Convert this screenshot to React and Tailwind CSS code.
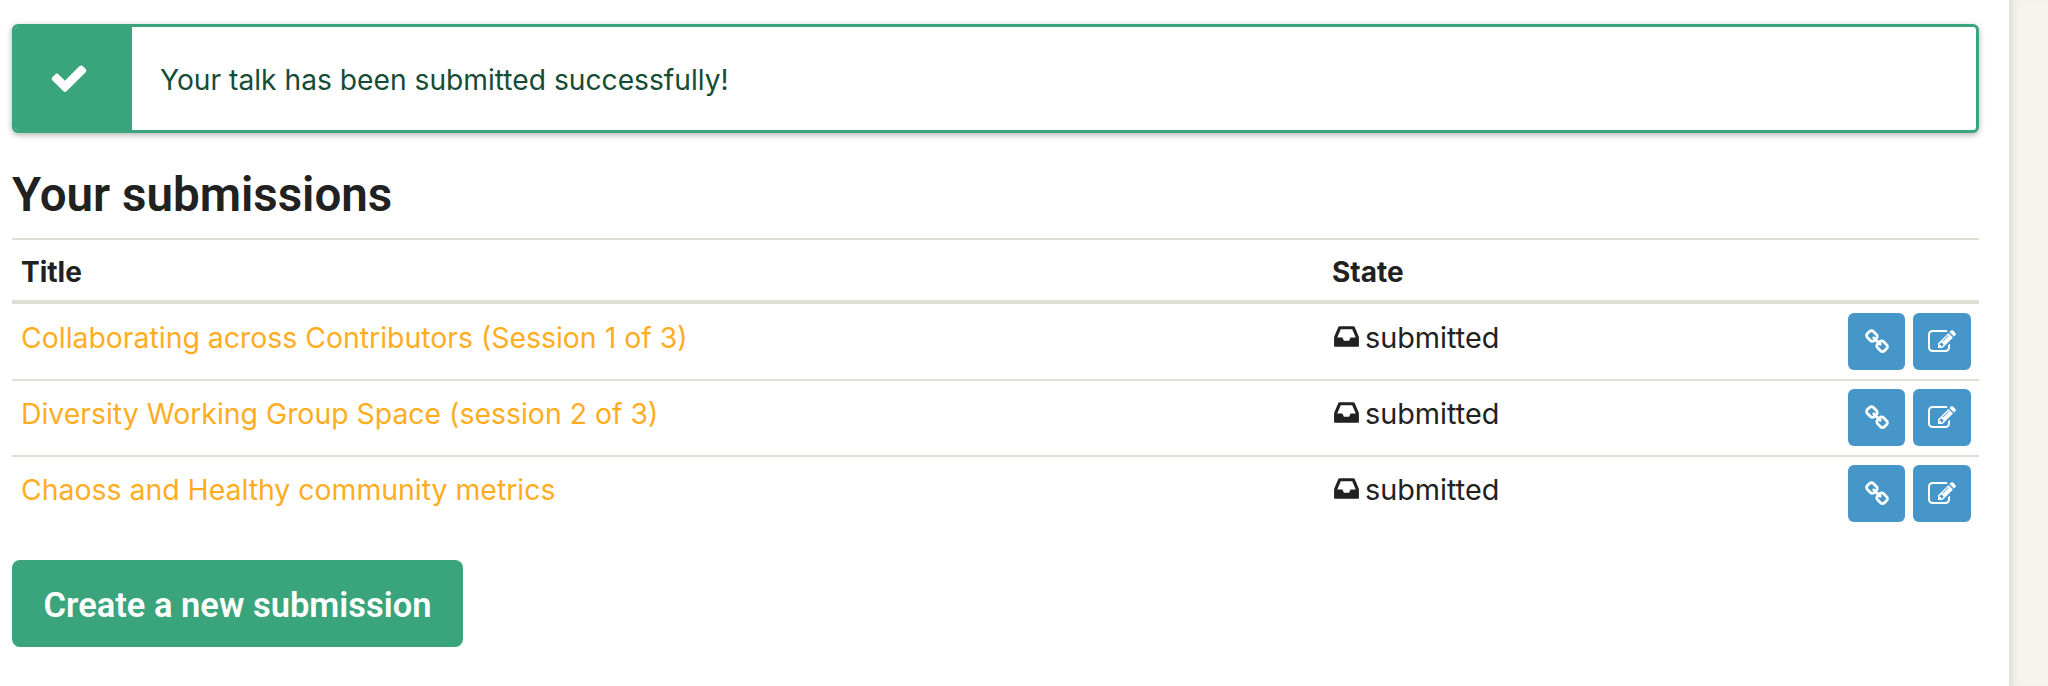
const submissions = [
  "Collaborating across Contributors (Session 1 of 3)",
  "Diversity Working Group Space (session 2 of 3)",
  "Chaoss and Healthy community metrics",
];

function Icon({ d, size, className = "" }) {
  return (
    <svg width={size} height={size} viewBox="0 0 1792 1792" fill="currentColor" className={`shrink-0 ${className}`}>
      <path d={d} />
    </svg>
  );
}

const checkPath =
  "M1671 566q0 40-28 68l-724 724-136 136q-28 28-68 28t-68-28l-136-136-362-362q-28-28-28-68t28-68l136-136q28-28 68-28t68 28l294 295 656-657q28-28 68-28t68 28l136 136q28 28 28 68z";
const linkPath =
  "M1520 1216q0-40-28-68l-208-208q-28-28-68-28-42 0-72 32 3 3 19 18.5t21.5 21.5 15 19 13 25.5 3.5 27.5q0 40-28 68t-68 28q-15 0-27.5-3.5t-25.5-13-19-15-21.5-21.5-18.5-19q-33 31-33 73 0 40 28 68l206 207q27 27 68 27 40 0 68-26l147-146q28-28 28-67zm-703-705q0-40-28-68l-206-207q-28-28-68-28-39 0-68 27l-147 146q-28 28-28 67 0 40 28 68l208 208q27 27 68 27 42 0 72-31-3-3-19-18.5t-21.5-21.5-15-19-13-25.5-3.5-27.5q0-40 28-68t68-28q15 0 27.5 3.5t25.5 13 19 15 21.5 21.5 18.5 19q33-31 33-73zm895 705q0 120-85 203l-147 146q-83 83-203 83-121 0-204-85l-206-207q-83-83-83-203 0-123 88-209l-88-88q-86 88-208 88-120 0-204-84l-208-208q-84-84-84-204t85-203l147-146q83-83 203-83 121 0 204 85l206 207q83 83 83 203 0 123-88 209l88 88q86-88 208-88 120 0 204 84l208 208q84 84 84 204z";
const editPath =
  "M888 1184l116-116-152-152-116 116v56h96v96h56zm440-720q-16-16-33 1l-350 350q-17 17-1 33t33-1l350-350q17-17 1-33zm80 594v190q0 119-84.5 203.5t-203.5 84.5h-832q-119 0-203.5-84.5t-84.5-203.5v-832q0-119 84.5-203.5t203.5-84.5h832q63 0 117 25 15 7 18 23 3 17-9 29l-49 49q-14 14-32 8-23-6-45-6h-832q-66 0-113 47t-47 113v832q0 66 47 113t113 47h832q66 0 113-47t47-113v-126q0-13 9-22l64-64q15-15 35-7t20 29zm-96-738l288 288-672 672h-288v-288zm444 132l-92 92-288-288 92-92q28-28 68-28t68 28l152 152q28 28 28 68t-28 68z";
const inboxPath =
  "M1151 960h316q-1-3-2.5-8.5t-2.5-7.5l-212-496h-708l-212 496q-1 2-2.5 7.5t-2.5 8.5h316l95 192h320zm513 30v482q0 26-19 45t-45 19h-1408q-26 0-45-19t-19-45v-482q0-62 25-123l238-552q10-25 36.5-42t52.5-17h832q26 0 52.5 17t36.5 42l238 552q25 61 25 123z";

function Row({ title }) {
  return (
    <div className="grid grid-cols-[1311px_1fr] border-b-2 border-[#e0dfd5] h-[76px] last:border-b-0">
      <div className="pl-[9px] pt-[13px]">
        <a className="text-[#ffad1f] text-[28.4px] leading-[40px]">{title}</a>
      </div>
      <div className="flex justify-between pl-[9px] pr-[8px] pt-[8px]">
        <div className="flex items-start gap-[4px] pt-[5px] text-[28.8px] leading-[40px] text-[#212121]">
          <Icon d={inboxPath} size={29} className="mt-[4px]" />
          submitted
        </div>
        <div className="flex gap-2">
          <button className="w-[57px] h-[57px] bg-[#4696c9] rounded-[6px] flex items-center justify-center text-white">
            <Icon d={linkPath} size={26} />
          </button>
          <button className="w-[58px] h-[57px] bg-[#4696c9] rounded-[6px] flex items-center justify-center text-white">
            <Icon d={editPath} size={28} />
          </button>
        </div>
      </div>
    </div>
  );
}

export default function App() {
  return (
    <div className="flex w-[2048px] h-[686px] overflow-hidden bg-white font-['Inter','Liberation_Sans',sans-serif]">
      <main className="w-[2009px] pl-3 pr-[30px] pt-6">
        <div className="flex h-[109px] rounded-[6px] border-[3px] border-[#3aa57c] bg-white shadow-[0_2px_6px_rgba(0,0,0,0.3)] overflow-hidden">
          <div className="w-[117px] bg-[#3aa57c] flex items-center justify-center pr-[10px] pb-[2px] text-white">
            <Icon d={checkPath} size={40} />
          </div>
          <div className="pl-[28px] pt-[3px] flex items-center text-[28.2px] text-[#164b35]">
            Your talk has been submitted successfully!
          </div>
        </div>
        <h2 className="mt-[30px] text-[47.5px] leading-[64px] font-semibold text-[#212121] font-['Roboto',sans-serif]">
          Your submissions
        </h2>
        <div className="mt-[11px] border-t-2 border-[#e0dfd5]">
          <div className="grid grid-cols-[1311px_1fr] h-[64px] pt-[3px] border-b-[4px] border-[#e0dfd5] items-center font-bold text-[28px] text-[#212121]">
            <div className="pl-[9px]">Title</div>
            <div className="pl-[9px]">State</div>
          </div>
          <div className="pt-px">
            {submissions.map((title) => (
              <Row key={title} title={title} />
            ))}
          </div>
        </div>
        <button className="mt-[27px] w-[451px] h-[87px] pt-[4px] rounded-[8px] bg-[#3aa57c] text-white text-[34.5px] font-semibold font-['Roboto',sans-serif]">
          Create a new submission
        </button>
      </main>
      <aside className="w-[39px] bg-[#f5f3ec] shadow-[inset_8px_0_8px_-6px_rgba(0,0,0,0.12)]" />
    </div>
  );
}
